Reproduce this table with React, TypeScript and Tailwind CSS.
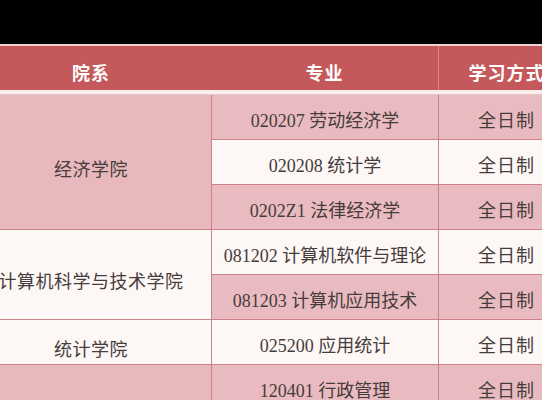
import React from "react";

const font = {
  fontFamily: '"Liberation Serif", "Noto Sans CJK SC", serif',
};

type Row = { major: string; pink: boolean };

const rows: Row[] = [
  { major: "020207 劳动经济学", pink: true },
  { major: "020208 统计学", pink: false },
  { major: "0202Z1 法律经济学", pink: true },
  { major: "081202 计算机软件与理论", pink: false },
  { major: "081203 计算机应用技术", pink: true },
  { major: "025200 应用统计", pink: false },
  { major: "120401 行政管理", pink: true },
];

const depts = [
  { name: "经济学院", start: 1, span: 3, pink: true },
  { name: "计算机科学与技术学院", start: 4, span: 2, pink: false },
  { name: "统计学院", start: 6, span: 1, pink: false },
  { name: "", start: 7, span: 1, pink: true },
];

const rowStartCls = ["", "row-start-1", "row-start-2", "row-start-3", "row-start-4", "row-start-5", "row-start-6", "row-start-7"];
const rowSpanCls = ["", "row-span-1", "row-span-2", "row-span-3"];

export default function App() {
  return (
    <div className="w-[542px] h-[400px] overflow-hidden bg-black relative" style={font}>
      <div className="h-[44px] bg-black" />
      <div className="h-[2px] bg-[#efd2d2]" />
      {/* header */}
      <div className="h-[44px] bg-[#c5585b] ml-[-29px] grid grid-cols-[240px_227px_1px_135px] text-white font-bold text-[18px] tracking-[1px]"
        style={{ fontFamily: '"Noto Sans CJK SC", sans-serif' }}>
        <div className="flex justify-center pt-[15px] leading-[22px]">院系</div>
        <div className="flex justify-center pt-[15px] leading-[22px]">专业</div>
        <div className="bg-[#d98a8c]" />
        <div className="flex justify-center pt-[15px] leading-[22px]">学习方式</div>
      </div>
      <div className="h-[4px] bg-[#fbeeee]" />
      <div className="h-px bg-[#e9c3c6]" />
      {/* body */}
      <div className="ml-[-29px] w-[603px] grid grid-cols-[240px_226px_135px] grid-rows-[repeat(7,44px)] gap-px bg-[#c98389] text-[18px] text-[#463c3c]">
        {depts.map((d) => (
          <div
            key={d.start}
            className={`col-start-1 ${rowStartCls[d.start]} ${rowSpanCls[d.span]} flex items-center justify-center pt-4 tracking-[0.5px] ${
              d.pink ? "bg-[#e8b8bd]" : "bg-[#fdf7f6]"
            }`}
          >
            {d.name}
          </div>
        ))}
        {rows.map((r, i) => (
          <React.Fragment key={r.major}>
            <div
              className={`col-start-2 ${rowStartCls[i + 1]} flex items-center justify-center pt-2 ${
                r.pink ? "bg-[#e9bbc0]" : "bg-[#fdf7f6]"
              }`}
            >
              {r.major}
            </div>
            <div
              className={`col-start-3 ${rowStartCls[i + 1]} flex items-center justify-center pt-2 tracking-[1px] ${
                r.pink ? "bg-[#e9bbc0]" : "bg-[#fdf7f6]"
              }`}
            >
              全日制
            </div>
          </React.Fragment>
        ))}
      </div>
    </div>
  );
}
